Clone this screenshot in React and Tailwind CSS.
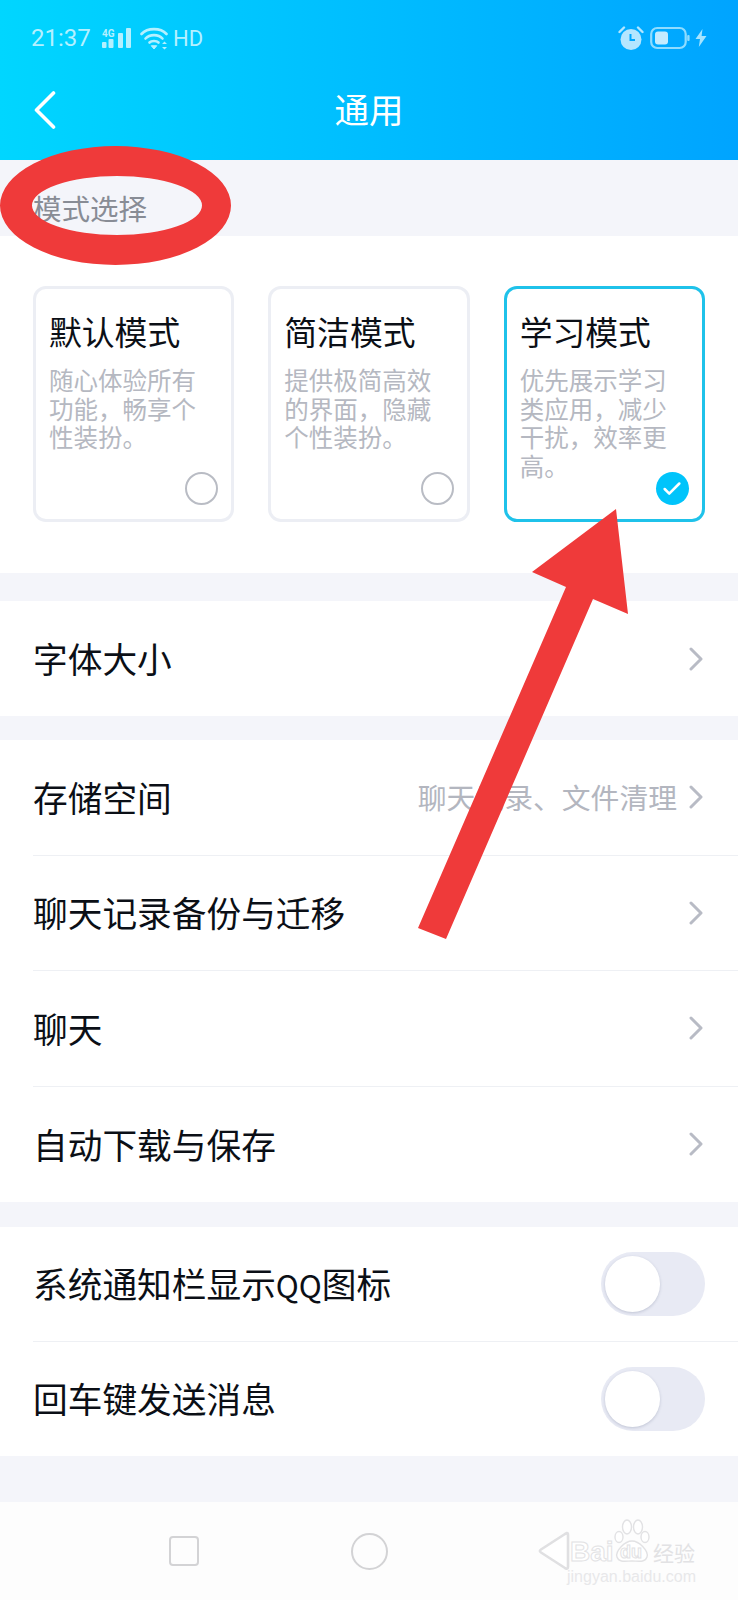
import { Check } from "lucide-react";

const modes = [
  { title: "默认模式", desc: "随心体验所有功能，畅享个性装扮。" },
  { title: "简洁模式", desc: "提供极简高效的界面，隐藏个性装扮。" },
  { title: "学习模式", desc: "优先展示学习类应用，减少干扰，效率更高。", active: true },
];

function StatusBar() {
  return (
    <div className="flex h-[74px] items-center justify-between pl-[31px] pr-[31px] pt-[2px] font-['Roboto',sans-serif] text-[24px] text-[#b4f0ff]">
      <div className="flex items-center">
        <span className="w-[70px]">21:37</span>
        <svg width="31" height="22" viewBox="0 0 31 22" fill="#b4f0ff">
          <text x="1" y="9.5" fontSize="10" fontWeight="700" fontFamily="Roboto, sans-serif">4G</text>
          <rect x="1" y="15" width="4.5" height="6" rx="1" />
          <rect x="7.5" y="12" width="5" height="9" rx="1" />
          <rect x="17" y="6" width="5" height="15" rx="1" />
          <rect x="25" y="1" width="5" height="20" rx="1" />
        </svg>
        <svg className="ml-[8px]" width="28" height="23" viewBox="0 0 28 23" fill="none" stroke="#b4f0ff" strokeWidth="2.6" strokeLinecap="round">
          <path d="M1.5 7 C7.5 0.5 20.5 0.5 26.5 7" />
          <path d="M5.5 11.5 C9.5 7 18.5 7 22.5 11.5" />
          <path d="M9.5 15.5 C11.5 13.5 16.5 13.5 18.5 15.5" />
          <path d="M11.5 19 L14 22 L16.5 19 Z" fill="#b4f0ff" strokeWidth="1" />
          <path d="M22 17 L24.5 14.5 L27 17 Z M22 20 L24.5 22.5 L27 20 Z" fill="#b4f0ff" stroke="none" />
        </svg>
        <span className="ml-[5px] text-[22px]">HD</span>
      </div>
      <div className="flex items-center">
        <svg width="26" height="24" viewBox="0 0 26 24">
          <circle cx="13" cy="13.5" r="10.5" fill="#b4e6ff" />
          <path d="M12.5 8 V14 H17" fill="none" stroke="#00a8ff" strokeWidth="2" />
          <path d="M1.5 6 L6 1.5 M24.5 6 L20 1.5" stroke="#b4e6ff" strokeWidth="2.4" strokeLinecap="round" />
        </svg>
        <svg className="ml-[6px]" width="40" height="24" viewBox="0 0 40 24" fill="none">
          <rect x="1.2" y="2" width="34.5" height="20" rx="6" stroke="#8fdcff" strokeWidth="2.2" />
          <rect x="5" y="5.5" width="13" height="13" rx="3" fill="#c4ebff" />
          <rect x="37.2" y="9" width="2.4" height="6" rx="1" fill="#8fdcff" />
        </svg>
        <svg className="ml-[5px]" width="12" height="18" viewBox="0 0 12 18" fill="#a6e4ff">
          <path d="M7.5 0 L0.5 10 H5 L3.8 18 L11.5 7 H6.6 Z" />
        </svg>
      </div>
    </div>
  );
}

function Header() {
  return (
    <div className="h-40 bg-linear-to-r from-[#00d6ff] to-[#00a4ff]">
      <StatusBar />
      <div className="grid h-[72px] grid-cols-[1fr_auto_1fr] items-center pl-[34px]">
        <svg width="22" height="38" viewBox="0 0 22 38" fill="none" stroke="#ffffff" strokeWidth="3.6" strokeLinecap="round" strokeLinejoin="round">
          <path d="M19.5 2 L2.5 19 L19.5 36" />
        </svg>
        <h1 className="-ml-[34px] pb-[3px] text-[34.5px] font-normal text-white">通用</h1>
        <div />
      </div>
    </div>
  );
}

function ModeCard({ title, desc, active }) {
  return (
    <div className={`relative h-[236px] rounded-[13px] border-[3px] pl-[13px] pt-[20px] ${active ? "border-[#1fc2ea]" : "border-[#eceef4]"}`}>
      <div className="text-[32.8px] leading-[44px] text-[#0b0f16]">{title}</div>
      <p className="mt-[13px] w-[150px] text-[24.5px] leading-[28.7px] text-[#b5b8c1]">{desc}</p>
      <div className="absolute bottom-[14px] right-[13px]">
        {active ? (
          <div className="flex h-[33px] w-[33px] items-center justify-center rounded-full bg-[#00c4fb]">
            <Check size={22} color="#ffffff" strokeWidth={2.8} />
          </div>
        ) : (
          <div className="h-[33px] w-[33px] rounded-full border-2 border-[#b9bcc4]" />
        )}
      </div>
    </div>
  );
}

function Arrow() {
  return (
    <svg className="shrink-0" width="14" height="24" viewBox="0 0 14 24" fill="none" stroke="#b8bbc5" strokeWidth="3" strokeLinecap="round" strokeLinejoin="round">
      <path d="M2 2 L12 12 L2 22" />
    </svg>
  );
}

function Row({ label, meta, last }) {
  return (
    <div className={`ml-[33px] flex items-center justify-between pr-[35px] ${last ? "" : "border-b border-[#eef0f4]"}`}>
      <span className="pb-[1px] text-[34.7px] text-[#0b0f16]">{label}</span>
      <div className="flex items-center">
        {meta && <span className="mr-[12px] pb-[1px] text-[28.8px] text-[#b3b6bf]">{meta}</span>}
        <Arrow />
      </div>
    </div>
  );
}

function ToggleRow({ children, last }) {
  return (
    <div className={`ml-[33px] flex items-center justify-between pr-[33px] ${last ? "" : "border-b border-[#eef0f4]"}`}>
      <span className="pb-[1px] text-[34.7px] text-[#0b0f16]">{children}</span>
      <div className="flex h-16 w-[104px] items-center rounded-full bg-[#e8eaf4] pl-[4px]">
        <div className="h-14 w-[55px] rounded-full bg-white shadow-[0_1px_3px_rgba(100,110,140,0.3)]" />
      </div>
    </div>
  );
}

function BottomNav() {
  return (
    <div className="flex h-[98px] items-center justify-center bg-[#fdfdfd]">
      <div className="flex w-[185px] justify-center">
        <div className="h-[30px] w-[30px] rounded-[4px] border-2 border-[#d3d3d5]" />
      </div>
      <div className="flex w-[185px] justify-center">
        <div className="h-[37px] w-[37px] rounded-full border-2 border-[#d3d3d5]" />
      </div>
      <div className="flex w-[185px] justify-center">
        <svg width="32" height="40" viewBox="0 0 32 40" fill="#ffffff" stroke="#e0e0e2" strokeWidth="2.6" strokeLinejoin="round">
          <path d="M29 2 C30 2 30 3 30 4 V36 C30 38 28 38 27 37 L3 21.5 C1.5 20.5 1.5 19.5 3 18.5 L27 3 Z" />
        </svg>
      </div>
    </div>
  );
}

// baidu watermark sits over the nav bar
function Watermark() {
  const hollow = "text-white [-webkit-text-stroke:1px_#e2e2e4]";
  return (
    <div className="absolute left-[567px] top-[1519px] w-[135px] font-['Liberation_Sans',sans-serif]">
      <svg className="absolute left-[47px] top-0" width="36" height="44" viewBox="0 0 36 44" fill="#ffffff" stroke="#e2e2e4" strokeWidth="1.4">
        <ellipse cx="5" cy="18" rx="4" ry="5.5" />
        <ellipse cx="13" cy="8" rx="4.5" ry="7" />
        <ellipse cx="24" cy="8" rx="4.5" ry="7" />
        <ellipse cx="31" cy="18" rx="4" ry="5.5" />
        <path d="M18 22 C25 22 35 32 33 38 C31 44 24 42 18 42 C12 42 5 44 3 38 C1 32 11 22 18 22 Z" />
      </svg>
      <div className="relative mt-[18px] flex h-[30px] items-center whitespace-nowrap">
        <span className={`w-[53px] pl-[3px] text-[28px] leading-[30px] font-bold ${hollow}`}>Bai</span>
        <span className={`w-[33px] text-[18px] leading-[30px] font-bold ${hollow}`}>du</span>
        <span className="font-['Noto_Sans_CJK_SC',sans-serif] text-[21px] leading-[30px] text-[#e2e2e4]">经验</span>
      </div>
      <div className="relative whitespace-nowrap text-[16px] leading-[20px] text-[#e8e8ea]">jingyan.baidu.com</div>
    </div>
  );
}

function Annotations() {
  return (
    <svg className="absolute left-0 top-0" width="738" height="1000" viewBox="0 0 738 1000" fill="#ef3a3a">
      <path
        fillRule="evenodd"
        d="M0 205.5 A115.5 59.5 0 1 0 231 205.5 A115.5 59.5 0 1 0 0 205.5 Z M32 205.5 A85 29.5 0 1 0 202 205.5 A85 29.5 0 1 0 32 205.5 Z"
      />
      <polygon points="616,509 532,572 566,587 418,928 446,939 593,599 628,614" />
    </svg>
  );
}

export default function App() {
  return (
    <div className="relative h-[1600px] w-[738px] overflow-hidden bg-[#f4f5fa] font-['Noto_Sans_CJK_SC',sans-serif]">
      <Header />
      <div className="flex h-[76px] items-center pl-[33px] pt-5 text-[28.5px] text-[#888c95]">模式选择</div>

      <div className="grid h-[337px] grid-cols-3 gap-[34px] bg-white px-[33px] pt-[50px]">
        {modes.map((m) => (
          <ModeCard key={m.title} {...m} />
        ))}
      </div>

      <div className="mt-[28px] grid h-[115px] bg-white">
        <Row label="字体大小" last />
      </div>

      <div className="mt-[24px] grid h-[462px] grid-rows-4 bg-white">
        <Row label="存储空间" meta="聊天记录、文件清理" />
        <Row label="聊天记录备份与迁移" />
        <Row label="聊天" />
        <Row label="自动下载与保存" last />
      </div>

      <div className="mt-[25px] grid h-[229px] grid-rows-2 bg-white">
        <ToggleRow>
          系统通知栏显示<span className="text-[31px]">QQ</span>图标
        </ToggleRow>
        <ToggleRow last>回车键发送消息</ToggleRow>
      </div>

      <div className="mt-[46px]">
        <BottomNav />
      </div>

      <Annotations />
      <Watermark />
    </div>
  );
}
